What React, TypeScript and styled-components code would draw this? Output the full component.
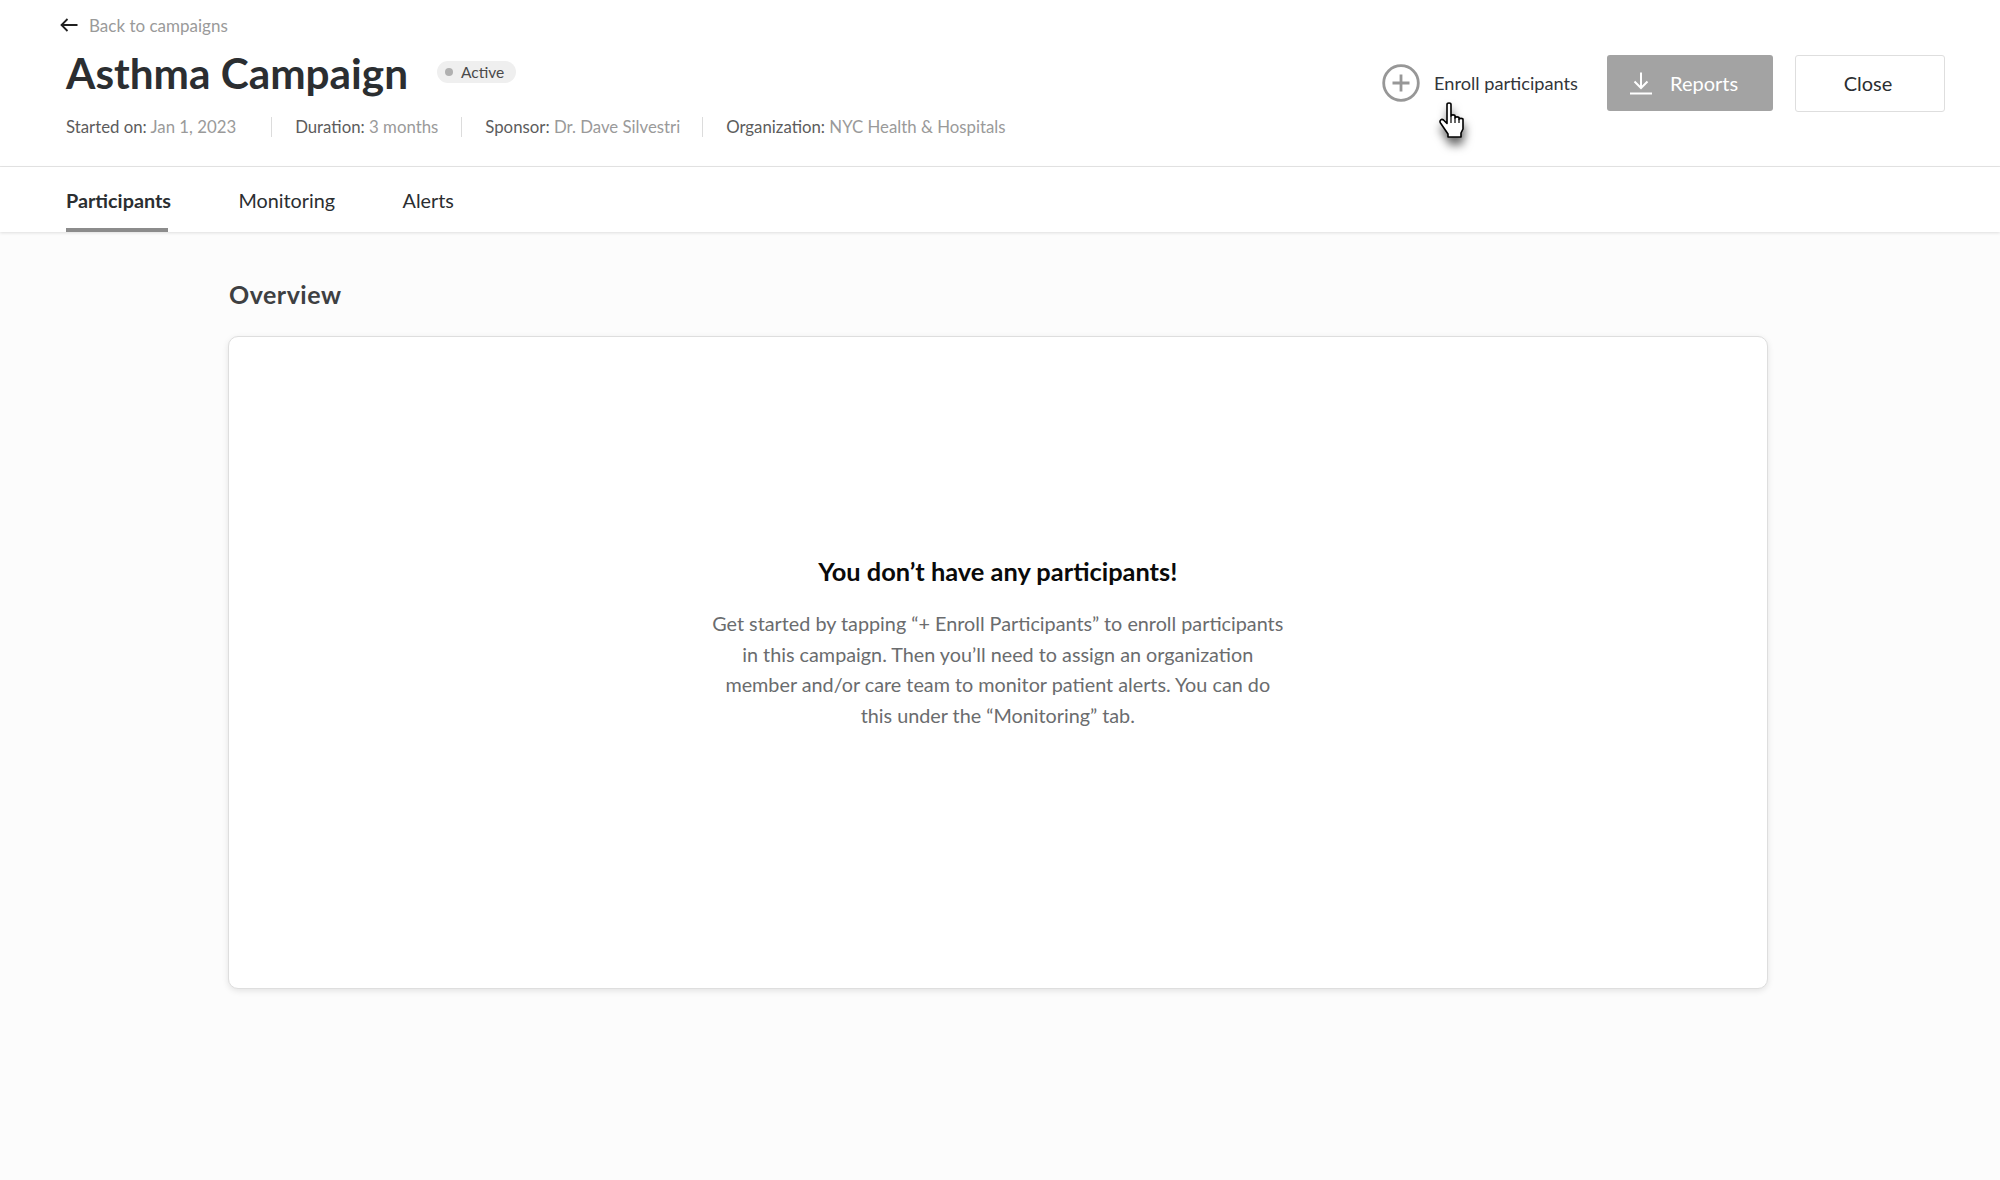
import styled, { createGlobalStyle } from 'styled-components';

const GlobalStyle = createGlobalStyle`
  html, body {
    margin: 0;
    padding: 0;
    background: #fcfcfc;
    font-family: Lato, "Open Sans", sans-serif;
    color: #2b2e31;
  }
`;

const meta = [
  { label: 'Started on:', value: 'Jan 1, 2023' },
  { label: 'Duration:', value: '3 months' },
  { label: 'Sponsor:', value: 'Dr. Dave Silvestri' },
  { label: 'Organization:', value: 'NYC Health & Hospitals' },
];

const tabs = ['Participants', 'Monitoring', 'Alerts'];

const ArrowLeft = () => (
  <svg width="18" height="14" viewBox="0 0 18 14" fill="none" stroke="#1f1f1f" strokeWidth="1.8">
    <path d="M17.5 7H1.500M7.500 1L1.500 7l6 6" />
  </svg>
);

const PlusCircle = () => (
  <svg width="38" height="38" viewBox="0 0 38 38" fill="none" stroke="#979797">
    <circle cx="19" cy="19" r="17.300" strokeWidth="2.800" />
    <path d="M19 10.500v17M10.500 19h17" strokeWidth="2.800" />
  </svg>
);

const Download = () => (
  <svg width="24" height="24" viewBox="0 0 24 24" fill="none" stroke="#fff" strokeWidth="2">
    <path d="M12 1.500V17M5.500 10.500L12 17l6.500-6.500M1 22.500h22" />
  </svg>
);

const HandCursor = () => (
  <svg width="30" height="38" viewBox="0 0 30 38">
    <path
      d="M8 2.500c0-2 4-2 4 0V14c0-1.500 4-1.500 4 0v2c0-1.500 4-1.500 4 0v1.500c0-1.500 4-1.500 4 0V27l-2 4v4H9v-3L1.500 21c-1.500-2.500 1-4.500 3-3L8 21.500z"
      fill="#fff"
      stroke="#000"
      strokeWidth="1.600"
      strokeLinejoin="round"
    />
    <path d="M12 14v7M16 16v5M20 17.500V21" stroke="#000" strokeWidth="1.200" fill="none" />
  </svg>
);

export default function App() {
  return (
    <Page>
      <GlobalStyle />
      <Header>
        <BackLink>
          <ArrowLeft />
          Back to campaigns
        </BackLink>
        <HeaderRow>
          <div>
            <TitleRow>
              <Title>Asthma Campaign</Title>
              <Badge>
                <BadgeDot />
                Active
              </Badge>
            </TitleRow>
            <MetaRow>
              {meta.map((item) => (
                <MetaItem key={item.label}>
                  {item.label} <span>{item.value}</span>
                </MetaItem>
              ))}
            </MetaRow>
          </div>
          <Actions>
            <EnrollButton>
              <PlusCircle />
              Enroll participants
              <CursorWrap>
                <HandCursor />
              </CursorWrap>
            </EnrollButton>
            <ReportsButton>
              <Download />
              Reports
            </ReportsButton>
            <CloseButton>Close</CloseButton>
          </Actions>
        </HeaderRow>
      </Header>
      <TabBar>
        {tabs.map((tab, i) => (
          <Tab key={tab} $active={i === 0}>
            {tab}
          </Tab>
        ))}
      </TabBar>
      <Main>
        <SectionTitle>Overview</SectionTitle>
        <Card>
          <EmptyTitle>You don’t have any participants!</EmptyTitle>
          <EmptyText>
            Get started by tapping “+ Enroll Participants” to enroll participants in this campaign.
            Then you’ll need to assign an organization member and/or care team to monitor patient
            alerts. You can do this under the “Monitoring” tab.
          </EmptyText>
        </Card>
      </Main>
    </Page>
  );
}

const Page = styled.div`
  display: flex;
  flex-direction: column;
  min-height: 1180px;
  background: #fcfcfc;
`;

const Header = styled.header`
  display: flex;
  flex-direction: column;
  height: 167px;
  padding: 15px 55px 0 66px;
  box-sizing: border-box;
  background: #fff;
  border-bottom: 1px solid #e6e6e6;
`;

const BackLink = styled.a`
  display: flex;
  align-items: center;
  gap: 11px;
  margin-left: -6px;
  height: 20px;
  font-size: 17px;
  color: #9a9a9a;
`;

const HeaderRow = styled.div`
  display: flex;
  justify-content: space-between;
  align-items: flex-start;
`;

const TitleRow = styled.div`
  display: flex;
  align-items: center;
  gap: 29px;
  margin-top: 14px;
  height: 48px;
`;

const Title = styled.h1`
  margin: 0;
  font-size: 42.300px;
  line-height: 48px;
  font-weight: 700;
  color: #2b2e31;
`;

const Badge = styled.span`
  display: flex;
  align-items: center;
  gap: 8px;
  height: 22px;
  padding: 0 12px 0 8px;
  margin-top: -2px;
  border-radius: 11px;
  background: #efefef;
  font-size: 15.500px;
  color: #4a4a4a;
`;

const BadgeDot = styled.span`
  width: 8px;
  height: 8px;
  border-radius: 50%;
  background: #b0b0b0;
`;

const MetaRow = styled.div`
  display: flex;
  margin-top: 20px;
`;

const MetaItem = styled.div`
  height: 20px;
  line-height: 20px;
  font-size: 16.800px;
  color: #5c5c5c;
  padding: 0 23px;
  border-left: 1px solid #dcdcdc;

  &:first-child {
    padding-left: 0;
    padding-right: 35px;
    border-left: none;
  }

  &:nth-child(3) {
    padding-right: 22px;
  }

  span {
    color: #9a9a9a;
  }
`;

const Actions = styled.div`
  display: flex;
  align-items: center;
  margin-top: 19px;
`;

const EnrollButton = styled.div`
  position: relative;
  display: flex;
  align-items: center;
  gap: 14px;
  margin-right: 29px;
  font-size: 18.200px;
  color: #33363a;
`;

const CursorWrap = styled.div`
  position: absolute;
  left: 57px;
  top: 38px;
  line-height: 0;
  filter: drop-shadow(1px 7px 5px rgba(0, 0, 0, 0.6));
`;

const ReportsButton = styled.div`
  display: flex;
  align-items: center;
  gap: 17px;
  width: 166px;
  height: 56px;
  padding-left: 22px;
  box-sizing: border-box;
  margin-right: 22px;
  border-radius: 3px;
  background: #a3a3a3;
  color: #fff;
  font-size: 20px;
`;

const CloseButton = styled.div`
  display: flex;
  align-items: center;
  justify-content: center;
  width: 150px;
  height: 57px;
  margin-top: 1px;
  padding: 0 4px 2px 0;
  box-sizing: border-box;
  border: 1px solid #dedede;
  border-radius: 3px;
  background: #fff;
  font-size: 20px;
  color: #2b2e31;
`;

const TabBar = styled.nav`
  display: flex;
  gap: 67.500px;
  height: 65px;
  padding-left: 66px;
  box-sizing: border-box;
  background: #fff;
  box-shadow: 0 1px 3px rgba(0, 0, 0, 0.12);
`;

const Tab = styled.div<{ $active?: boolean }>`
  position: relative;
  height: 65px;
  line-height: 66px;
  font-size: 19.800px;
  font-weight: ${(p) => (p.$active ? 700 : 400)};
  color: #2b2e31;

  &::after {
    content: '';
    display: ${(p) => (p.$active ? 'block' : 'none')};
    position: absolute;
    left: 0;
    bottom: 0;
    width: 102px;
    height: 4px;
    background: #8c8c8c;
  }
`;

const Main = styled.main`
  display: flex;
  flex-direction: column;
  padding: 46px 232px 0 227.500px;
`;

const SectionTitle = styled.h2`
  margin: 0 0 26px 1.500px;
  font-size: 25px;
  line-height: 32px;
  font-weight: 700;
  color: #3e4042;
  letter-spacing: 0.5px;
`;

const Card = styled.section`
  display: flex;
  flex-direction: column;
  align-items: center;
  height: 653px;
  padding-top: 217px;
  box-sizing: border-box;
  background: #fff;
  border: 1px solid #dedede;
  border-radius: 10px;
  box-shadow: 0 2px 6px rgba(0, 0, 0, 0.1);
`;

const EmptyTitle = styled.h3`
  margin: 0 0 20px;
  font-size: 25.400px;
  line-height: 34px;
  font-weight: 700;
  color: #0a0a0a;
`;

const EmptyText = styled.p`
  margin: 0;
  width: 580px;
  font-size: 19.800px;
  line-height: 30.500px;
  text-align: center;
  color: #6a6c6e;
`;
